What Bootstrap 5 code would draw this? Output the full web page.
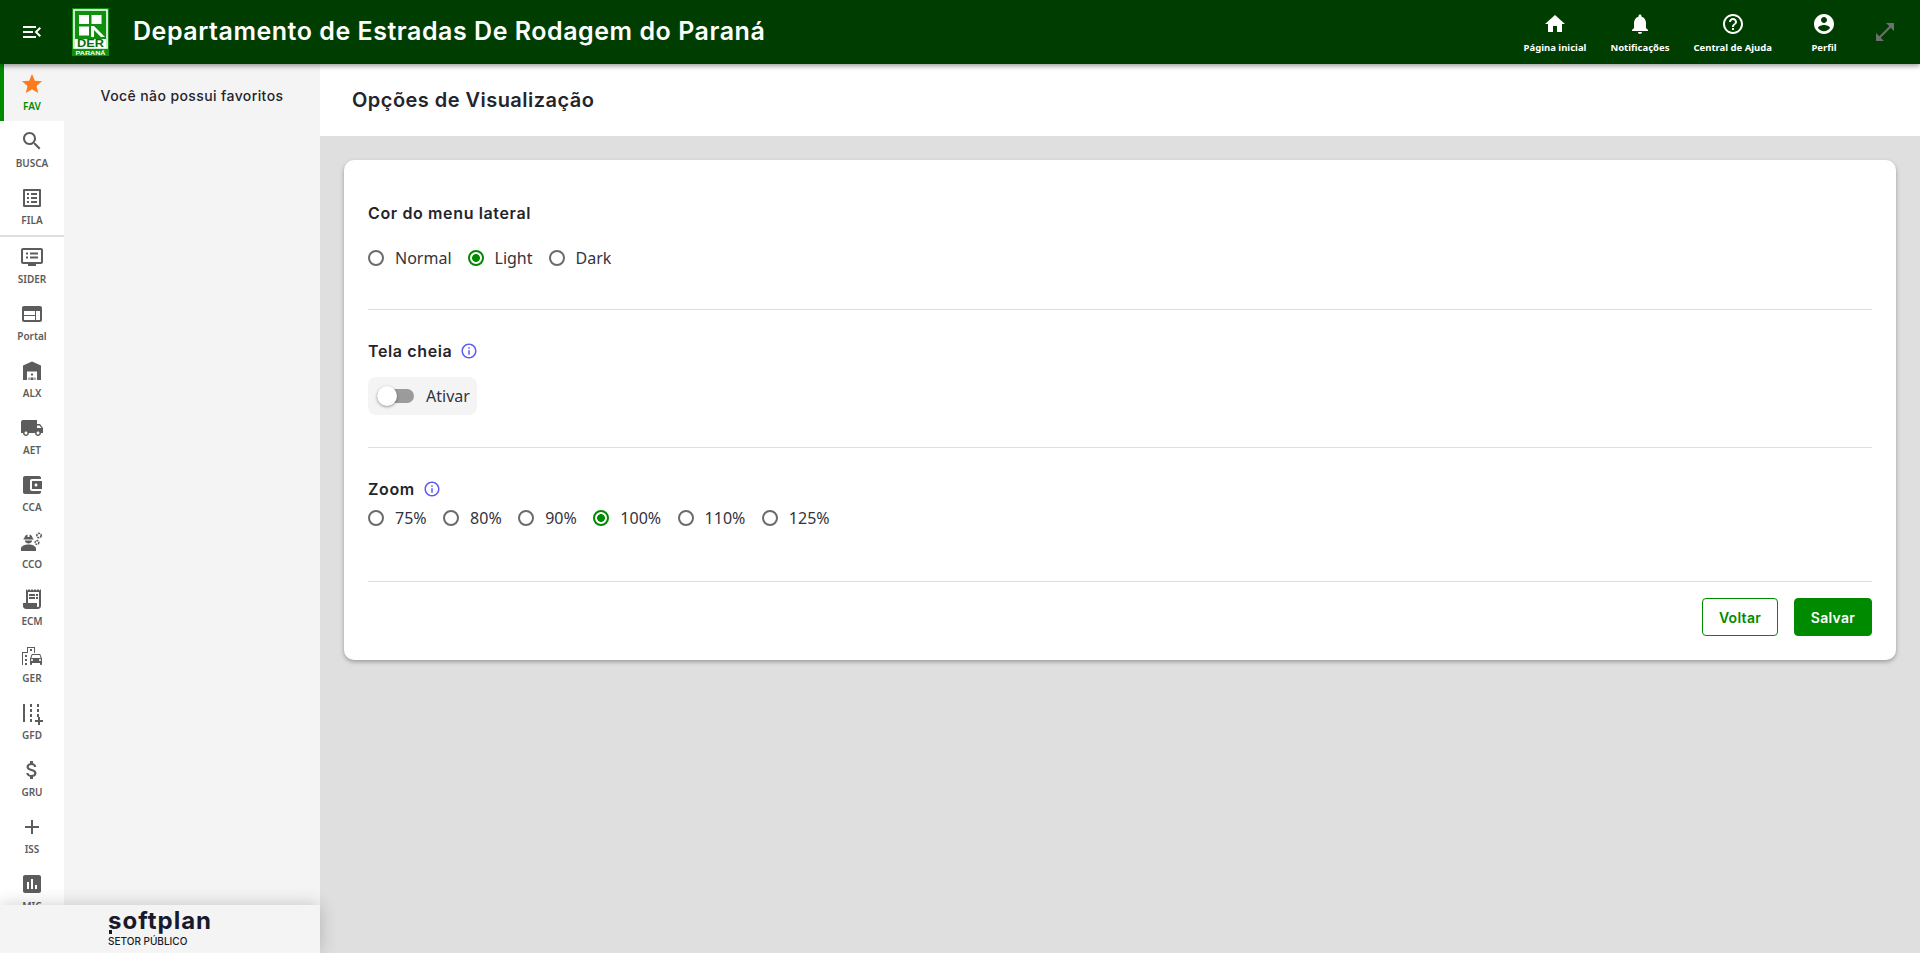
<!DOCTYPE html>
<html lang="pt-BR">
<head>
    <meta charset="UTF-8">
    <meta name="viewport" content="width=device-width, initial-scale=1.0">
    <title>Opções de Visualização</title>
    <link rel="stylesheet" href="https://cdn.jsdelivr.net/npm/bootstrap@5.3.0/dist/css/bootstrap.min.css">
    <style>
        html, body { height: 100%; }
        body { font-family: "Noto Sans", "Open Sans", sans-serif; color: #24242c; background: #dfdfdf; overflow: hidden; }
        .heading-font { font-family: Inter, "Noto Sans", sans-serif; }

        /* Barra superior */
        .top-bar { height: 64px; background: #003d00; box-shadow: 0 2px 5px rgba(0,0,0,.4); z-index: 5; padding: 0; flex-wrap: nowrap; }
        .menu-toggle { width: 64px; }
        .top-bar svg { fill: #fff; }
        .der-logo { width: 37px; height: 48px; margin-left: 8px; }
        .system-title { font-size: 25px; font-weight: 600; color: #fff; margin-left: 24px; letter-spacing: .53px; }
        .top-link { color: #fff; font-size: 9.5px; font-weight: 700; line-height: 13px; text-align: center; min-width: 56px; }
        .top-link svg { width: 24px; height: 24px; display: block; margin: 0 auto 5px; }
        .top-links { gap: 24px; padding-top: 2px; }
        .expand-icon { margin: 0 23px 0 21px; }
        .top-bar .expand-icon svg { fill: #6f6f6f; width: 24px; height: 24px; display: block; }

        /* Menu lateral */
        .rail { width: 64px; background: #fff; flex-shrink: 0; overflow: hidden; }
        .rail-item { height: 57px; display: flex; flex-direction: column; align-items: center; padding-top: 8px; color: #5c5c5c; font-size: 10px; font-weight: 600; line-height: 13px; }
        .rail-item svg { width: 24px; height: 24px; fill: #5c5c5c; margin-bottom: 4px; flex-shrink: 0; }
        .rail-active { background: #f4f4f4; border-left: 4px solid #008a00; color: #008a00; padding-right: 4px; }
        .rail-active svg { fill: #ff7a1a; }
        .rail-sep { height: 2px; background: #dedede; }
        .fav-panel { width: 256px; background: #f4f4f4; flex-shrink: 0; text-align: center; padding-top: 23px; font-size: 14px; font-weight: 500; line-height: 18px; letter-spacing: .4px; }

        /* Rodapé do menu */
        .side-foot { position: absolute; left: 0; bottom: 0; width: 320px; height: 48px; background: #f4f4f4; box-shadow: 0 0 18px rgba(0,0,0,.2); padding-left: 108px; }
        .soft-name { position: relative; font-size: 24px; font-weight: 700; line-height: 20px; color: #181a2c; padding-top: 6px; letter-spacing: 1px; }
        .soft-name::before { content: ""; position: absolute; left: 1px; top: 25px; width: 3px; height: 4px; background: #181a2c; }
        .soft-sub { font-size: 10px; line-height: 12px; margin-top: 4px; color: #181a2c; font-weight: 500; }

        /* Conteúdo */
        .page-head { height: 72px; background: #fff; padding-left: 32px; font-size: 20px; font-weight: 600; letter-spacing: .46px; }
        .page-body { padding: 24px; }
        .option-card { border: 0; border-radius: 10px; box-shadow: 0 2px 4px rgba(0,0,0,.3); height: 500px; padding: 0 24px; }
        .opt-title { font-size: 16px; font-weight: 600; line-height: 20px; letter-spacing: .63px; margin: 0; }
        .opt-title svg { width: 18px; height: 18px; fill: #5b5bf5; margin-left: 8px; }
        .opt-line { border: 0; border-top: 1px solid #dedede; opacity: 1; margin: 0; }
        .radio-row { display: flex; gap: 16px; font-size: 16px; line-height: 22px; }
        .radio-row .form-check { margin: 0; padding: 0; display: flex; align-items: center; min-height: 22px; }
        .radio-row .form-check-input { float: none; width: 16px; height: 16px; margin: 0 11px 0 0; border: 2px solid #6b6b6b; background-color: #fff; }
        .radio-row .form-check-input:checked { border-color: #008a00; background-color: #fff; background-image: radial-gradient(circle, #008a00 0 3.6px, transparent 4.1px); }
        .radio-row .form-check-label { color: #33333d; }
        .switch-box { width: 109px; height: 38px; margin-top: 16px; background: #f4f4f4; border-radius: 8px; padding-left: 9px; font-size: 16px; color: #33333d; }
        .switch-track { width: 37px; height: 14px; background: #9b9b9b; border-radius: 7px; display: flex; align-items: center; margin-right: 12px; flex-shrink: 0; }
        .switch-knob { width: 20px; height: 20px; background: #fff; border-radius: 50%; box-shadow: 0 1px 3px rgba(0,0,0,.4); flex-shrink: 0; }
        .btn-voltar, .btn-salvar { height: 38px; font-family: Inter, "Noto Sans", sans-serif; font-size: 14px; font-weight: 600; letter-spacing: .3px; border-radius: 4px; padding: 0; }
        .btn-voltar { width: 76px; color: #008a00; background: #fff; border: 1px solid #008a00; }
        .btn-salvar { width: 78px; color: #fff; background: #008a00; border: 1px solid #008a00; }

        /* Espaçamentos do cartão */
        .pad-first { padding-top: 43px; }
        .gap-cor { margin-top: 24px; }
        .line-cor { margin-top: 40px; }
        .title-gap { margin-top: 31px; }
        .line-tela { margin-top: 32px; }
        .gap-zoom { margin-top: 8px; gap: 16.5px; }
        .line-zoom { margin-top: 52px; }
    </style>
</head>
<body class="d-flex flex-column">
    <!-- Barra superior -->
    <nav class="navbar top-bar flex-shrink-0">
        <div class="d-flex align-items-center">
            <div class="menu-toggle d-flex justify-content-center">
                <svg width="24" height="24" viewBox="0 0 24 24"><path d="M3 18h13v-2H3v2zm0-5h10v-2H3v2zm0-7v2h13V6H3zm18 9.59L17.42 12 21 8.41 19.59 7l-5 5 5 5L21 15.59z"/></svg>
            </div>
            <svg class="der-logo" viewBox="0 0 37 48">
                <rect width="37" height="48" fill="#0e8f0e"/>
                <rect x="2" y="2" width="33" height="38" fill="none" stroke="#fff" stroke-width="1.6"/>
                <rect x="7" y="7" width="10" height="9" fill="#fff"/>
                <rect x="7" y="18.5" width="10" height="9" fill="#fff"/>
                <rect x="19.5" y="7" width="10" height="9" fill="#fff"/>
                <path d="M19 18h3l11 11h-4l-7-7v7h-3z" fill="#fff"/>
                <rect x="3" y="31" width="31" height="9" fill="#fff"/>
                <text x="18.5" y="39" text-anchor="middle" font-family="Liberation Sans, sans-serif" font-size="10" font-weight="700" fill="#0c6b0c" textLength="27" lengthAdjust="spacingAndGlyphs">DER</text>
                <text x="18.5" y="46.5" text-anchor="middle" font-family="Liberation Sans, sans-serif" font-size="6" font-weight="700" style="fill:#fff" textLength="30" lengthAdjust="spacingAndGlyphs">PARANÁ</text>
            </svg>
            <span class="system-title heading-font">Departamento de Estradas De Rodagem do Paraná</span>
        </div>
        <div class="d-flex align-items-center">
            <div class="top-links d-flex">
                <div class="top-link"><svg viewBox="0 0 24 24"><path d="M10 20v-6h4v6h5v-8h3L12 3 2 12h3v8z"/></svg>Página inicial</div>
                <div class="top-link"><svg viewBox="0 0 24 24"><path d="M12 22c1.1 0 2-.9 2-2h-4c0 1.1.89 2 2 2zm6-6v-5c0-3.07-1.64-5.64-4.5-6.32V4c0-.83-.67-1.5-1.5-1.5s-1.5.67-1.5 1.5v.68C7.63 5.36 6 7.92 6 11v5l-2 2v1h16v-1l-2-2z"/></svg>Notificações</div>
                <div class="top-link"><svg viewBox="0 0 24 24"><path d="M11 18h2v-2h-2v2zm1-16C6.48 2 2 6.48 2 12s4.48 10 10 10 10-4.48 10-10S17.52 2 12 2zm0 18c-4.41 0-8-3.59-8-8s3.59-8 8-8 8 3.59 8 8-3.59 8-8 8zm0-14c-2.21 0-4 1.79-4 4h2c0-1.1.9-2 2-2s2 .9 2 2c0 2-3 1.75-3 5h2c0-2.25 3-2.5 3-5 0-2.21-1.79-4-4-4z"/></svg>Central de Ajuda</div>
                <div class="top-link"><svg viewBox="0 0 24 24"><path d="M12 2C6.48 2 2 6.48 2 12s4.48 10 10 10 10-4.48 10-10S17.52 2 12 2zm0 3c1.66 0 3 1.34 3 3s-1.34 3-3 3-3-1.34-3-3 1.34-3 3-3zm0 14.2c-2.5 0-4.71-1.28-6-3.22.03-1.99 4-3.08 6-3.08 1.99 0 5.97 1.09 6 3.08-1.29 1.94-3.5 3.22-6 3.22z"/></svg>Perfil</div>
            </div>
            <div class="expand-icon"><svg viewBox="0 0 24 24"><path d="M21 11V3h-8l3.29 3.29-10 10L3 13v8h8l-3.29-3.29 10-10z"/></svg></div>
        </div>
    </nav>

    <div class="d-flex flex-grow-1 position-relative overflow-hidden">
        <!-- Menu lateral -->
        <div class="rail">
            <div class="rail-item rail-active"><svg viewBox="0 0 24 24"><path d="M12 17.27L18.18 21l-1.64-7.03L22 9.24l-7.19-.61L12 2 9.19 8.63 2 9.24l5.46 4.73L5.82 21z"/></svg>FAV</div>
            <div class="rail-item"><svg viewBox="0 0 24 24"><path d="M15.5 14h-.79l-.28-.27C15.41 12.59 16 11.11 16 9.5 16 5.91 13.09 3 9.5 3S3 5.91 3 9.5 5.91 16 9.5 16c1.61 0 3.09-.59 4.23-1.57l.27.28v.79l5 4.99L20.49 19l-4.99-5zm-6 0C7.01 14 5 11.99 5 9.5S7.01 5 9.5 5 14 7.01 14 9.5 11.99 14 9.5 14z"/></svg>BUSCA</div>
            <div class="rail-item"><svg viewBox="0 0 24 24"><path d="M19 5v14H5V5h14m1.1-2H3.9c-.5 0-.9.4-.9.9v16.2c0 .4.4.9.9.9h16.2c.4 0 .9-.5.9-.9V3.9c0-.5-.5-.9-.9-.9zM11 7h6v2h-6V7zm0 4h6v2h-6v-2zm0 4h6v2h-6zM7 7h2v2H7zm0 4h2v2H7zm0 4h2v2H7z"/></svg>FILA</div>
            <div class="rail-sep"></div>
            <div class="rail-item"><svg viewBox="0 0 24 24"><path d="M21 3H3c-1.1 0-2 .9-2 2v12c0 1.1.9 2 2 2h5v2h8v-2h5c1.1 0 2-.9 2-2V5c0-1.1-.9-2-2-2zm0 14H3V5h18v12zM6 7.5h2v2H6zm4 0h8v2h-8zm-4 4h2v2H6zm4 0h8v2h-8z"/></svg>SIDER</div>
            <div class="rail-item"><svg viewBox="0 0 24 24"><path d="M20 4H4c-1.1 0-2 .9-2 2v12c0 1.1.9 2 2 2h16c1.1 0 2-.9 2-2V6c0-1.1-.9-2-2-2zm-5 14H4v-4h11v4zm0-5H4V9h11v4zm5 5h-4V9h4v9z"/></svg>Portal</div>
            <div class="rail-item"><svg viewBox="0 0 24 24"><path d="M12 2.5 3 6.5V21h4V12.5h10V21h4V6.5zM10.5 18.5h3V21h-3zm-2 0h1V21h-1zm6 0h1V21h-1zM11 14.5h2v2h-2z"/></svg>ALX</div>
            <div class="rail-item"><svg viewBox="0 0 24 24"><path d="M20 8h-3V4H3c-1.1 0-2 .9-2 2v11h2c0 1.66 1.34 3 3 3s3-1.34 3-3h6c0 1.66 1.34 3 3 3s3-1.34 3-3h2v-5l-3-4zM6 18.5c-.83 0-1.5-.67-1.5-1.5s.67-1.5 1.5-1.5 1.5.67 1.5 1.5-.67 1.5-1.5 1.5zm13.5-9l1.96 2.5H17V9.5h2.5zm-1.5 9c-.83 0-1.5-.67-1.5-1.5s.67-1.5 1.5-1.5 1.5.67 1.5 1.5-.67 1.5-1.5 1.5z"/></svg>AET</div>
            <div class="rail-item"><svg viewBox="0 0 24 24"><path d="M21 18v1c0 1.1-.9 2-2 2H5c-1.11 0-2-.9-2-2V5c0-1.1.89-2 2-2h14c1.1 0 2 .9 2 2v1h-9c-1.11 0-2 .9-2 2v8c0 1.1.89 2 2 2h9zm-9-2h10V8H12v8zm4-2.5c-.83 0-1.5-.67-1.5-1.5s.67-1.5 1.5-1.5 1.5.67 1.5 1.5-.67 1.5-1.5 1.5z"/></svg>CCA</div>
            <div class="rail-item"><svg viewBox="0 0 24 24"><path d="M1 21v-2.5c0-2.5 4-4 7.5-4s7.5 1.5 7.5 4V21zM8.5 13.5c-2 0-3.5-1.4-3.7-3h7.4c-.2 1.6-1.7 3-3.7 3zM3.5 9.5v-1H4.2C4.5 6.5 5.8 5 7.5 4.6V7h2V4.6c1.7.4 3 1.9 3.3 3.9h.7v1z"/><circle cx="19" cy="5.5" r="2.2" fill="none" stroke="#5c5c5c" stroke-width="1.6" stroke-dasharray="2 .8"/><circle cx="17" cy="12.5" r="1.9" fill="none" stroke="#5c5c5c" stroke-width="1.5" stroke-dasharray="1.8 .7"/></svg>CCO</div>
            <div class="rail-item"><svg viewBox="0 0 24 24"><path d="M19.5 3.5 18 2l-1.5 1.5L15 2l-1.5 1.5L12 2l-1.5 1.5L9 2 7.5 3.5 6 2v14H3v3c0 1.66 1.34 3 3 3h12c1.66 0 3-1.34 3-3V2l-1.5 1.5zM19 19c0 .55-.45 1-1 1s-1-.45-1-1v-3H8V5h11v14z"/><path d="M9 7h6v2H9zm7 0h2v2h-2zM9 10h6v2H9zm7 0h2v2h-2z"/></svg>ECM</div>
            <div class="rail-item"><svg viewBox="0 0 24 24"><path d="M20.57 10.66C20.43 10.26 20.05 10 19.6 10h-7.19c-.46 0-.83.26-.98.66L10 14.77l.01 5.51c0 .38.31.72.69.72h.62c.38 0 .68-.38.68-.76V19h8v1.24c0 .38.31.76.69.76h.61c.38 0 .69-.34.69-.72L22 18.91v-4.14zM12.41 11h7.19l1.03 3h-9.25zM12 17c-.55 0-1-.45-1-1s.45-1 1-1 1 .45 1 1-.45 1-1 1zm8 0c-.55 0-1-.45-1-1s.45-1 1-1 1 .45 1 1-.45 1-1 1z"/><path d="M14 9h1V3H7v5H2v13h1V9h5V4h6z"/><path d="M5 11h2v2H5zm5-6h2v2h-2zM5 15h2v2H5zm0 4h2v2H5z"/></svg>GER</div>
            <div class="rail-item"><svg viewBox="0 0 24 24"><path d="M3 3h2v18H3zm7 0h2v3h-2zm0 5h2v3h-2zm0 5h2v3h-2zm7-10h2v3h-2zm0 5h2v3h-2zm0 5h2v3h-2zm-7 5h2v3h-2zm8-2h2v3h3v2h-3v3h-2v-3h-3v-2h3z"/></svg>GFD</div>
            <div class="rail-item"><svg viewBox="0 0 24 24"><path d="M11.8 10.9c-2.27-.59-3-1.2-3-2.15 0-1.09 1.01-1.85 2.7-1.85 1.78 0 2.44.85 2.5 2.1h2.21c-.07-1.72-1.12-3.3-3.21-3.81V3h-3v2.16c-1.94.42-3.5 1.68-3.5 3.61 0 2.31 1.91 3.46 4.7 4.13 2.5.6 3 1.48 3 2.41 0 .69-.49 1.79-2.7 1.79-2.06 0-2.87-.92-2.98-2.1h-2.2c.12 2.19 1.76 3.42 3.68 3.83V21h3v-2.15c1.95-.37 3.5-1.5 3.5-3.55 0-2.84-2.43-3.81-4.7-4.4z"/></svg>GRU</div>
            <div class="rail-item"><svg viewBox="0 0 24 24"><path d="M19 13h-6v6h-2v-6H5v-2h6V5h2v6h6v2z"/></svg>ISS</div>
            <div class="rail-item"><svg viewBox="0 0 24 24"><path d="M19 3H5c-1.1 0-2 .9-2 2v14c0 1.1.9 2 2 2h14c1.1 0 2-.9 2-2V5c0-1.1-.9-2-2-2zM9 17H7v-7h2v7zm4 0h-2V7h2v10zm4 0h-2v-4h2v4z"/></svg>MIC</div>
        </div>

        <!-- Favoritos -->
        <div class="fav-panel heading-font">Você não possui favoritos</div>

        <!-- Conteúdo -->
        <main class="flex-grow-1">
            <div class="page-head heading-font d-flex align-items-center">Opções de Visualização</div>
            <div class="page-body">
                <div class="card option-card">
                    <h2 class="opt-title heading-font pad-first">Cor do menu lateral</h2>
                    <div class="radio-row gap-cor">
                        <div class="form-check"><input class="form-check-input" type="radio" name="cor" id="corN"><label class="form-check-label" for="corN">Normal</label></div>
                        <div class="form-check"><input class="form-check-input" type="radio" name="cor" id="corL" checked><label class="form-check-label" for="corL">Light</label></div>
                        <div class="form-check"><input class="form-check-input" type="radio" name="cor" id="corD"><label class="form-check-label" for="corD">Dark</label></div>
                    </div>
                    <hr class="opt-line line-cor">

                    <h2 class="opt-title heading-font d-flex align-items-center title-gap">Tela cheia <svg viewBox="0 0 24 24"><path d="M11 7h2v2h-2zm0 4h2v6h-2zm1-9C6.48 2 2 6.48 2 12s4.48 10 10 10 10-4.48 10-10S17.52 2 12 2zm0 18c-4.41 0-8-3.59-8-8s3.59-8 8-8 8 3.59 8 8-3.59 8-8 8z"/></svg></h2>
                    <div class="switch-box d-flex align-items-center">
                        <span class="switch-track"><span class="switch-knob"></span></span>Ativar
                    </div>
                    <hr class="opt-line line-tela">

                    <h2 class="opt-title heading-font d-flex align-items-center title-gap">Zoom <svg viewBox="0 0 24 24"><path d="M11 7h2v2h-2zm0 4h2v6h-2zm1-9C6.48 2 2 6.48 2 12s4.48 10 10 10 10-4.48 10-10S17.52 2 12 2zm0 18c-4.41 0-8-3.59-8-8s3.59-8 8-8 8 3.59 8 8-3.59 8-8 8z"/></svg></h2>
                    <div class="radio-row gap-zoom">
                        <div class="form-check"><input class="form-check-input" type="radio" name="zoom" id="z75"><label class="form-check-label" for="z75">75%</label></div>
                        <div class="form-check"><input class="form-check-input" type="radio" name="zoom" id="z80"><label class="form-check-label" for="z80">80%</label></div>
                        <div class="form-check"><input class="form-check-input" type="radio" name="zoom" id="z90"><label class="form-check-label" for="z90">90%</label></div>
                        <div class="form-check"><input class="form-check-input" type="radio" name="zoom" id="z100" checked><label class="form-check-label" for="z100">100%</label></div>
                        <div class="form-check"><input class="form-check-input" type="radio" name="zoom" id="z110"><label class="form-check-label" for="z110">110%</label></div>
                        <div class="form-check"><input class="form-check-input" type="radio" name="zoom" id="z125"><label class="form-check-label" for="z125">125%</label></div>
                    </div>
                    <hr class="opt-line line-zoom">

                    <div class="d-flex justify-content-end gap-3 mt-3">
                        <button type="button" class="btn btn-voltar">Voltar</button>
                        <button type="button" class="btn btn-salvar">Salvar</button>
                    </div>
                </div>
            </div>
        </main>

        <!-- Rodapé do menu lateral -->
        <div class="side-foot heading-font">
            <div class="soft-name">softplan</div>
            <div class="soft-sub">SETOR PÚBLICO</div>
        </div>
    </div>

    <script src="https://cdn.jsdelivr.net/npm/bootstrap@5.3.0/dist/js/bootstrap.bundle.min.js"></script>
</body>
</html>
